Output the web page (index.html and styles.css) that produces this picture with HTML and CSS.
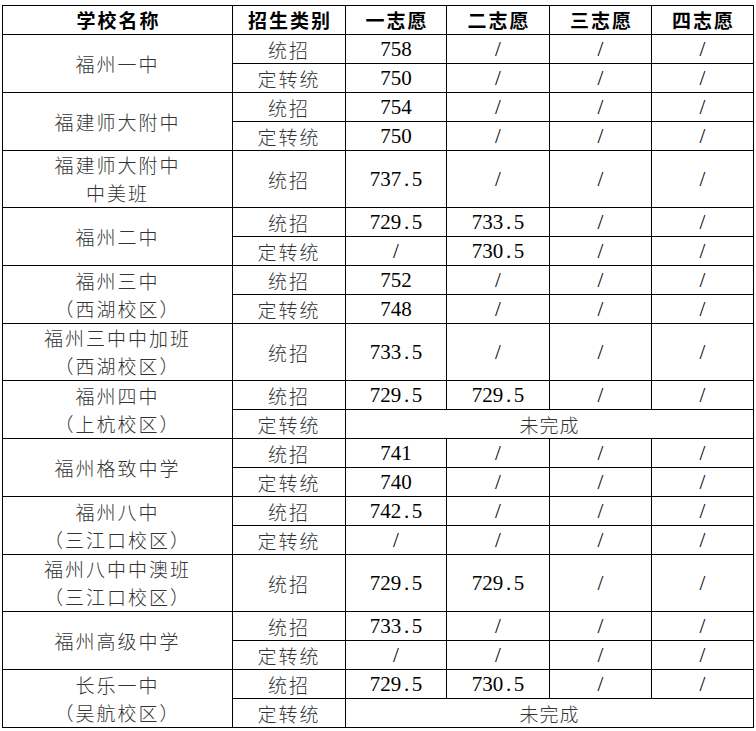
FILE: index.html
```html
<!DOCTYPE html>
<html lang="zh-CN">
<head>
<meta charset="utf-8">
<title>录取分数线</title>
<link rel="stylesheet" href="styles.css">
</head>
<body>
<table class="grid">
  <colgroup>
    <col class="c-school">
    <col class="c-type">
    <col class="c-v1">
    <col class="c-v2">
    <col class="c-v3">
    <col class="c-v4">
  </colgroup>
  <thead>
    <tr class="r">
      <th>学校名称</th>
      <th>招生类别</th>
      <th>一志愿</th>
      <th>二志愿</th>
      <th>三志愿</th>
      <th>四志愿</th>
    </tr>
  </thead>
  <tbody>
    <tr class="r">
      <td class="school" rowspan="2">福州一中</td>
      <td class="type">统招</td>
      <td class="num">758</td><td class="num">/</td><td class="num">/</td><td class="num">/</td>
    </tr>
    <tr class="r">
      <td class="type">定转统</td>
      <td class="num">750</td><td class="num">/</td><td class="num">/</td><td class="num">/</td>
    </tr>

    <tr class="r">
      <td class="school" rowspan="2">福建师大附中</td>
      <td class="type">统招</td>
      <td class="num">754</td><td class="num">/</td><td class="num">/</td><td class="num">/</td>
    </tr>
    <tr class="r">
      <td class="type">定转统</td>
      <td class="num">750</td><td class="num">/</td><td class="num">/</td><td class="num">/</td>
    </tr>

    <tr class="r2">
      <td class="school">福建师大附中<br>中美班</td>
      <td class="type">统招</td>
      <td class="num">737<span class="pt">.</span>5</td><td class="num">/</td><td class="num">/</td><td class="num">/</td>
    </tr>

    <tr class="r">
      <td class="school" rowspan="2">福州二中</td>
      <td class="type">统招</td>
      <td class="num">729<span class="pt">.</span>5</td><td class="num">733<span class="pt">.</span>5</td><td class="num">/</td><td class="num">/</td>
    </tr>
    <tr class="r">
      <td class="type">定转统</td>
      <td class="num">/</td><td class="num">730<span class="pt">.</span>5</td><td class="num">/</td><td class="num">/</td>
    </tr>

    <tr class="r">
      <td class="school" rowspan="2">福州三中<br>（西湖校区）</td>
      <td class="type">统招</td>
      <td class="num">752</td><td class="num">/</td><td class="num">/</td><td class="num">/</td>
    </tr>
    <tr class="r">
      <td class="type">定转统</td>
      <td class="num">748</td><td class="num">/</td><td class="num">/</td><td class="num">/</td>
    </tr>

    <tr class="r2">
      <td class="school">福州三中中加班<br>（西湖校区）</td>
      <td class="type">统招</td>
      <td class="num">733<span class="pt">.</span>5</td><td class="num">/</td><td class="num">/</td><td class="num">/</td>
    </tr>

    <tr class="r">
      <td class="school" rowspan="2">福州四中<br>（上杭校区）</td>
      <td class="type">统招</td>
      <td class="num">729<span class="pt">.</span>5</td><td class="num">729<span class="pt">.</span>5</td><td class="num">/</td><td class="num">/</td>
    </tr>
    <tr class="r">
      <td class="type">定转统</td>
      <td class="note" colspan="4">未完成</td>
    </tr>

    <tr class="r">
      <td class="school" rowspan="2">福州格致中学</td>
      <td class="type">统招</td>
      <td class="num">741</td><td class="num">/</td><td class="num">/</td><td class="num">/</td>
    </tr>
    <tr class="r">
      <td class="type">定转统</td>
      <td class="num">740</td><td class="num">/</td><td class="num">/</td><td class="num">/</td>
    </tr>

    <tr class="r">
      <td class="school" rowspan="2">福州八中<br>（三江口校区）</td>
      <td class="type">统招</td>
      <td class="num">742<span class="pt">.</span>5</td><td class="num">/</td><td class="num">/</td><td class="num">/</td>
    </tr>
    <tr class="r">
      <td class="type">定转统</td>
      <td class="num">/</td><td class="num">/</td><td class="num">/</td><td class="num">/</td>
    </tr>

    <tr class="r2">
      <td class="school">福州八中中澳班<br>（三江口校区）</td>
      <td class="type">统招</td>
      <td class="num">729<span class="pt">.</span>5</td><td class="num">729<span class="pt">.</span>5</td><td class="num">/</td><td class="num">/</td>
    </tr>

    <tr class="r">
      <td class="school" rowspan="2">福州高级中学</td>
      <td class="type">统招</td>
      <td class="num">733<span class="pt">.</span>5</td><td class="num">/</td><td class="num">/</td><td class="num">/</td>
    </tr>
    <tr class="r">
      <td class="type">定转统</td>
      <td class="num">/</td><td class="num">/</td><td class="num">/</td><td class="num">/</td>
    </tr>

    <tr class="r">
      <td class="school" rowspan="2">长乐一中<br>（吴航校区）</td>
      <td class="type">统招</td>
      <td class="num">729<span class="pt">.</span>5</td><td class="num">730<span class="pt">.</span>5</td><td class="num">/</td><td class="num">/</td>
    </tr>
    <tr class="r">
      <td class="type">定转统</td>
      <td class="note" colspan="4">未完成</td>
    </tr>
  </tbody>
</table>
</body>
</html>
```

FILE: styles.css
```css
html, body {
  margin: 0;
  background: #ffffff;
}

body {
  padding: 5px 0 0 2px;
  font-family: "Noto Sans CJK SC", sans-serif;
}

.grid {
  border-collapse: collapse;
  table-layout: fixed;
  width: 752px;
}

.c-school { width: 230px; }
.c-type { width: 113px; }
.c-v1 { width: 101px; }
.c-v2 { width: 103px; }
.c-v3 { width: 102px; }
.c-v4 { width: 102px; }

.grid th,
.grid td {
  border: 1px solid #000;
  padding: 0;
  text-align: center;
  vertical-align: middle;
  overflow: hidden;
  white-space: nowrap;
}

.r { height: 29px; }
.r2 { height: 57px; }

.grid th {
  font-family: "Noto Sans CJK SC", sans-serif;
  font-weight: 700;
  font-size: 19px;
  letter-spacing: 2px;
  padding: 0 0 2px 2px;
  line-height: 25px;
  color: #000;
}

.school,
.type,
.note {
  font-family: "Noto Sans CJK SC", sans-serif;
  font-weight: 300;
  font-size: 19px;
  letter-spacing: 2px;
  padding: 0 0 2px 2px;
  line-height: 25px;
  color: #333;
}

.school {
  line-height: 28px;
  padding-bottom: 1px;
}

.note {
  letter-spacing: 1px;
  padding-left: 1px;
}

.num {
  font-family: "Liberation Serif", serif;
  font-size: 21px;
  line-height: 26px;
  color: #000;
}

.pt {
  display: inline-block;
  width: 10.5px;
  text-align: center;
}
```
